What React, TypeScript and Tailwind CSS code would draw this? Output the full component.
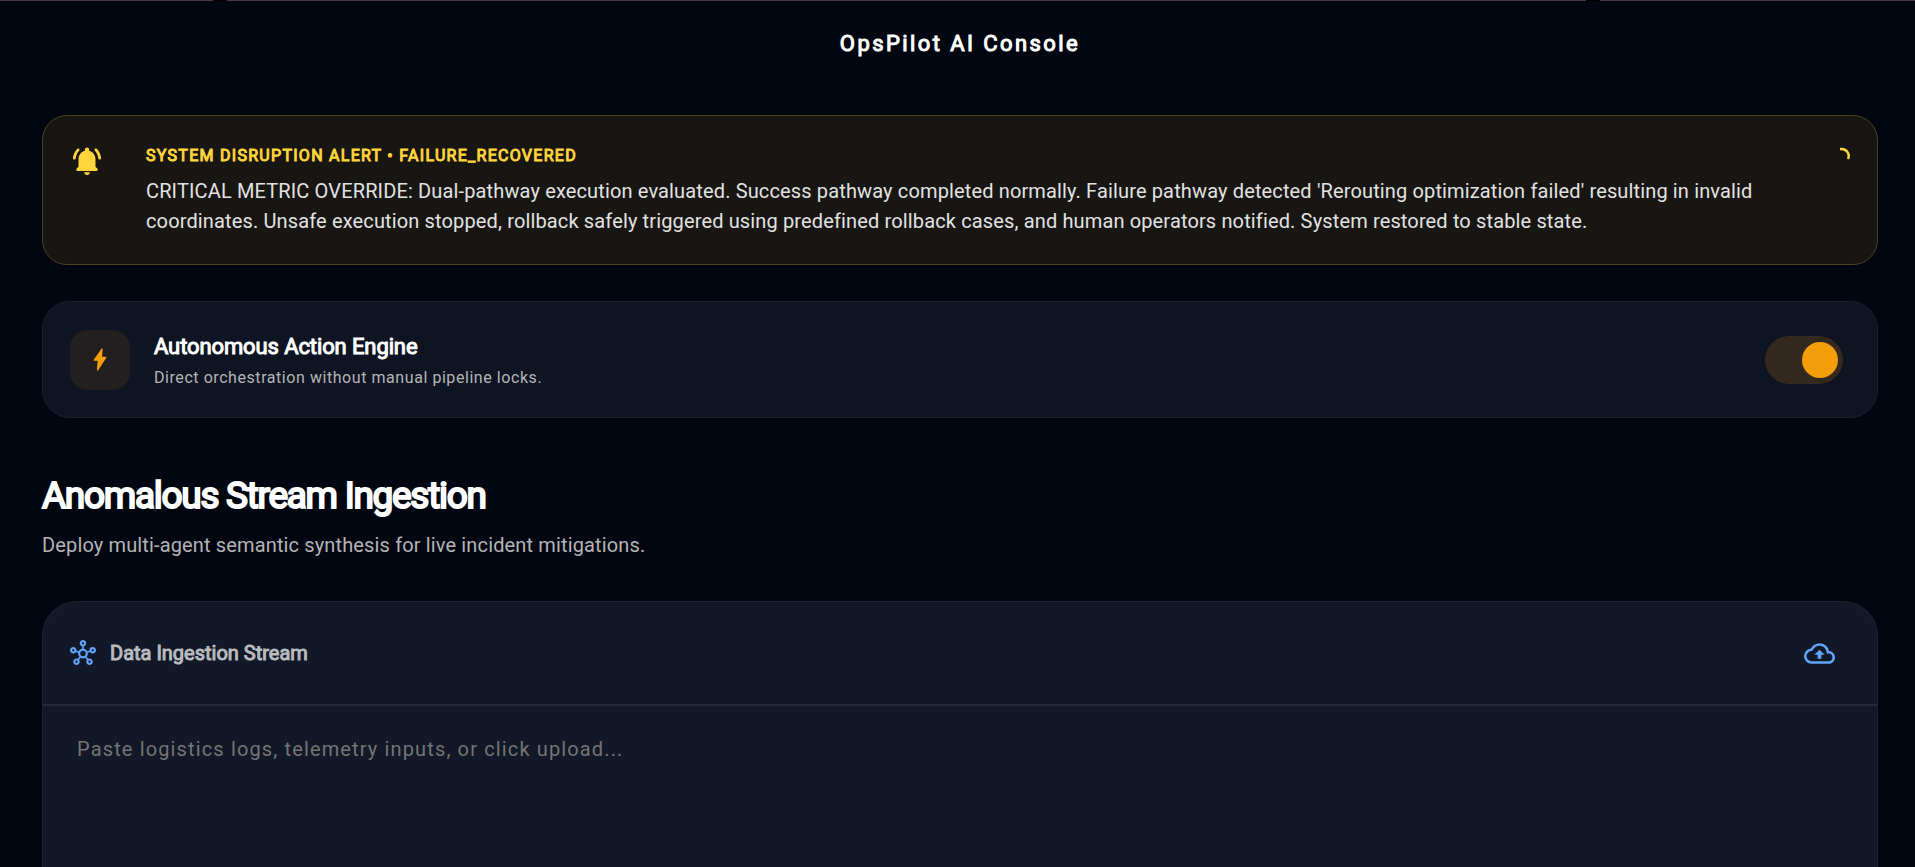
import { useState } from "react";
import { MdOutlineCloudUpload, MdOutlineHub } from "react-icons/md";

function AlertBell() {
    return (
        <svg viewBox="0 0 24 24" className="size-[34px] shrink-0 fill-[#ffd53b]" aria-hidden="true">
            <path d="M12 22c1.1 0 2-.9 2-2h-4c0 1.1.9 2 2 2zm6-6v-5c0-3.07-1.63-5.64-4.5-6.32V4c0-.83-.67-1.5-1.5-1.5s-1.5.67-1.5 1.5v.68C7.64 5.36 6 7.92 6 11v5l-1.29 1.29c-.63.63-.19 1.71.7 1.71h13.17c.89 0 1.34-1.08.71-1.71L18 16z" />
            <path d="M6.47 4.81c.37-.38.35-.99-.03-1.37-.4-.4-1.05-.39-1.44.02-1.62 1.72-2.7 3.95-2.95 6.43C2 10.48 2.46 11 3.05 11c.51 0 .94-.38.99-.88.19-2.04 1.08-3.89 2.43-5.31z" />
            <path d="M18.99 3.44c-.39-.41-1.04-.42-1.43-.02-.38.38-.4.98-.04 1.37 1.34 1.42 2.25 3.26 2.43 5.31.05.51.48.9.99.9.59 0 1.06-.52.99-1.11-.25-2.48-1.32-4.72-2.94-6.45z" />
        </svg>
    );
}

function Bolt() {
    return (
        <svg viewBox="0 0 40 68" className="h-[23px] w-[14px] fill-[#f59e0b] stroke-[#f59e0b]" aria-hidden="true">
            <path d="M26 3 L3 36 H15 L13 65 L37 28 H24 Z" strokeWidth="4" strokeLinejoin="round" />
        </svg>
    );
}

function Spinner() {
    return (
        <svg viewBox="0 0 22 22" className="size-[22px] shrink-0" role="status" aria-label="Working">
            <path d="M12 5h1.5a7 7 0 0 1 6.5 10" fill="none" stroke="#ffd53b" strokeWidth="2.5" />
        </svg>
    );
}

export default function App() {
    const [autonomous, setAutonomous] = useState(true);
    const [stream, setStream] = useState("");

    return (
        <div className="flex h-screen flex-col overflow-hidden bg-[#020611] font-[Roboto,sans-serif] text-white">
            <div className="flex h-px shrink-0">
                <div className="w-[213px] bg-[#4b3549]" />
                <div className="w-[14px] bg-black" />
                <div className="grow bg-[#4b3549]" />
                <div className="w-[14px] bg-black" />
                <div className="w-[315px] bg-[#4b3549]" />
            </div>

            <header className="flex h-[84px] shrink-0 items-center justify-center pr-[37px] pl-[42px]">
                <h1 className="text-[22px] tracking-[0.11em] [-webkit-text-stroke:1px]">OpsPilot AI Console</h1>
            </header>

            <main className="flex grow flex-col pt-[30px] pr-[37px] pl-[42px]">
                <section className="flex h-[150px] shrink-0 items-start rounded-[25px] border border-[#4f4220] bg-[#171612] px-[27px] pt-7">
                    <AlertBell />
                    <div className="ml-[42px] grow">
                        <h2 className="text-base leading-6 tracking-[0.08em] text-[#ffd53b] [-webkit-text-stroke:1px]">
                            SYSTEM DISRUPTION ALERT • FAILURE_RECOVERED
                        </h2>
                        <p className="mt-2 text-xl leading-[30px] tracking-[0.007em] text-[#e2e2e1]">
                            CRITICAL METRIC OVERRIDE: Dual-pathway execution evaluated. Success pathway completed normally. Failure pathway detected 'Rerouting optimization failed' resulting in invalid coordinates. Unsafe execution stopped, rollback safely triggered using predefined rollback cases, and human operators notified. System restored to stable state.
                        </p>
                    </div>
                    <Spinner />
                </section>

                <section className="mt-9 flex h-[117px] shrink-0 items-center rounded-[28px] border border-[#1b202c] bg-[#0e1421] pr-[34px] pl-[27px]">
                    <div className="flex size-[60px] items-center justify-center rounded-[18px] bg-[#231f20]">
                        <Bolt />
                    </div>
                    <div className="ml-6 grow pt-1">
                        <h2 className="text-[22px] leading-8 tracking-[-0.005em] [-webkit-text-stroke:1px]">Autonomous Action Engine</h2>
                        <p className="text-base leading-[30px] tracking-[0.035em] text-[#b4b5b7]">
                            Direct orchestration without manual pipeline locks.
                        </p>
                    </div>
                    <label className="flex h-12 w-[78px] items-center justify-start rounded-full bg-[#1f2430] px-[5px] has-checked:justify-end has-checked:bg-[#33291e]">
                        <input
                            type="checkbox"
                            role="switch"
                            aria-label="Autonomous Action Engine"
                            checked={autonomous}
                            onChange={(e) => setAutonomous(e.target.checked)}
                            className="size-9 appearance-none rounded-full bg-[#6b7280] checked:bg-[#f59e0b]"
                        />
                    </label>
                </section>

                <h2 className="mt-14 text-[37px] leading-[44px] tracking-[-0.035em] [-webkit-text-stroke:2px]">
                    Anomalous Stream Ingestion
                </h2>
                <p className="mt-2 text-xl leading-[38px] tracking-[0.007em] text-[#b4b4b5]">
                    Deploy multi-agent semantic synthesis for live incident mitigations.
                </p>

                <section className="mt-[37px] flex grow flex-col rounded-t-[35px] border border-b-0 border-[#1d2431] bg-[#121827]">
                    <div className="flex h-[104px] shrink-0 items-center border-b-2 border-[#222938] pr-[42px] pl-[27px]">
                        <MdOutlineHub className="size-[26px] text-[#60a5fa]" />
                        <label htmlFor="stream" className="ml-[14px] grow text-xl text-[#b9bbbf] [-webkit-text-stroke:1px]">
                            Data Ingestion Stream
                        </label>
                        <button type="button" aria-label="Upload logs" className="text-[#60a5fa]">
                            <MdOutlineCloudUpload className="size-[31px]" />
                        </button>
                    </div>
                    <textarea
                        id="stream"
                        value={stream}
                        onChange={(e) => setStream(e.target.value)}
                        placeholder="Paste logistics logs, telemetry inputs, or click upload..."
                        className="grow resize-none px-[34px] pt-7 text-xl leading-[30px] tracking-[0.057em] outline-none placeholder:text-[#747474]"
                    />
                </section>
            </main>
        </div>
    );
}
